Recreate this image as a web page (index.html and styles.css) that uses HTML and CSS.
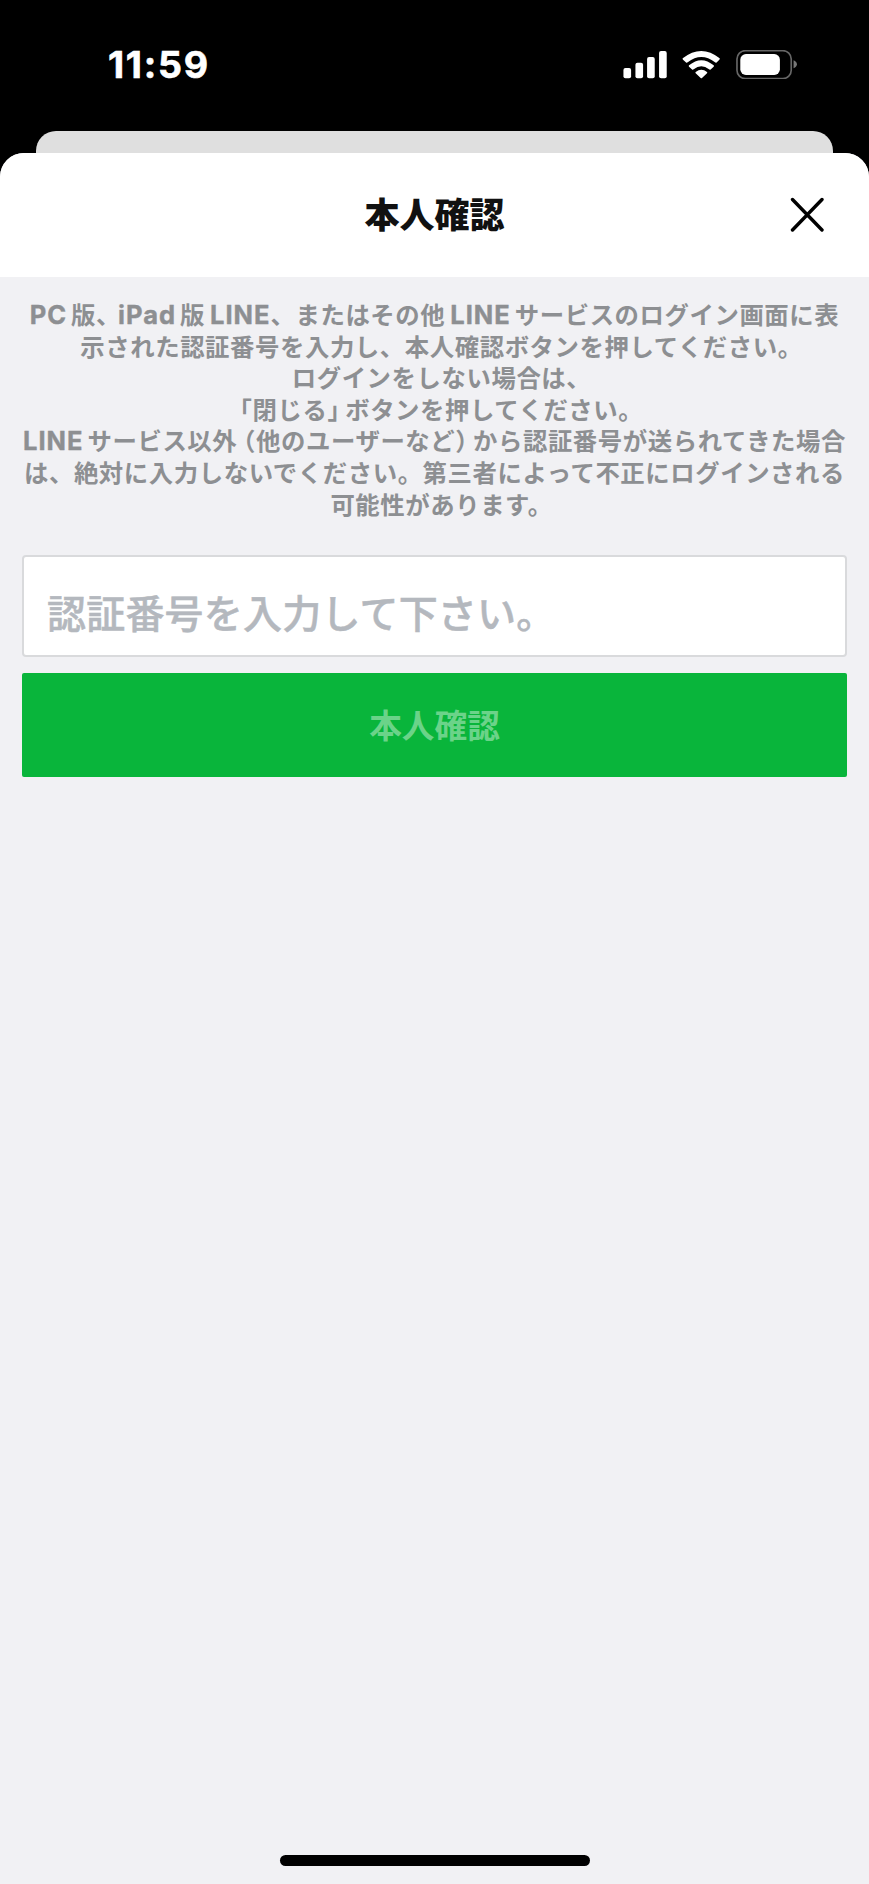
FILE: index.html
```html
<!DOCTYPE html>
<html lang="ja">
<head>
  <meta charset="UTF-8">
  <meta name="viewport" content="width=device-width, initial-scale=1.0">
  <title>本人確認</title>
  <link rel="stylesheet" href="styles.css">
</head>
<body>
  <div class="status-bar">
    <span class="time">11:59</span>
    <svg class="status-icons" viewBox="69 60 522 88" fill="#fff">
      <!-- signal -->
      <rect x="70" y="114" width="23" height="31" rx="6"/>
      <rect x="106" y="98" width="23" height="47" rx="6"/>
      <rect x="141" y="81" width="23" height="64" rx="6"/>
      <rect x="177" y="63" width="23" height="82" rx="6"/>
      <!-- wifi -->
      <path d="M248 85 Q304 41 359 85 Q360 87 358 89 L349 98 Q347 99 345 97 Q304 65 263 97 Q261 99 259 98 L249 89 Q247 87 248 85Z"/>
      <path d="M267 106 Q304 75 341 106 Q343 108 341 110 L331 119 Q329 120 327 118 Q304 100 281 118 Q279 120 277 119 L267 110 Q265 108 267 106Z"/>
      <path d="M287 126 Q304 112 321 126 Q323 128 321 130 L306 144 Q304 146 302 144 L287 130 Q285 128 287 126Z"/>
      <!-- battery -->
      <rect x="411" y="62" width="163" height="84" rx="25" fill="none" stroke="#666" stroke-width="5"/>
      <rect x="421" y="72" width="119" height="63" rx="17"/>
      <path d="M581 91 Q591 95 591 103 Q591 111 581 115Z" fill="#777"/>
    </svg>
  </div>

  <div class="back-sheet"></div>

  <div class="sheet">
    <header class="header">
      <h1>本人確認</h1>
      <button class="close-btn" aria-label="閉じる">
        <svg viewBox="0 0 34 36" fill="none" stroke="#000" stroke-width="3.4" stroke-linecap="round">
          <path d="M2.5 2.5 L32 33 M32 2.5 L2.5 33"/>
        </svg>
      </button>
    </header>

    <main class="content">
      <p class="notice">
        <span class="line"><b>PC</b>版、<b class="tight">iPad</b>版<b class="before-comma">LINE</b>、またはその他<b>LINE</b>サービスのログイン画面に表</span>
        <span class="line hang">示された認証番号を入力し、本人確認ボタンを押してください。</span>
        <span class="line hang">ログインをしない場合は、</span>
        <span class="line hang"><i>「</i>閉じる<i class="end">」</i>ボタンを押してください。</span>
        <span class="line"><b>LINE</b>サービス以外<i class="start">（</i>他のユーザーなど<i class="end">）</i>から認証番号が送られてきた場合</span>
        <span class="line">は、絶対に入力しないでください。第三者によって不正にログインされる</span>
        <span class="line hang">可能性があります。</span>
      </p>

      <input class="code-input" type="text" placeholder="認証番号を入力して下さい。">
      <button class="submit-btn" disabled>本人確認</button>
    </main>

    <div class="home-indicator"></div>
  </div>
</body>
</html>
```

FILE: styles.css
```css
* {
  box-sizing: border-box;
}

body {
  display: flex;
  flex-direction: column;
  height: 1884px;
  margin: 0;
  background-color: #000;
  font-family: 'Noto Sans CJK JP', sans-serif;
  overflow: hidden;
}

.status-bar {
  display: flex;
  justify-content: space-between;
  align-items: center;
  height: 131px;
  padding: 0 72px 2px 108px;
}

.time {
  font-family: 'Inter', sans-serif;
  font-size: 37.5px;
  font-weight: 700;
  letter-spacing: 1.7px;
  color: #fff;
  -webkit-text-stroke: 0.6px #fff;
}

.status-icons {
  width: 174px;
  height: 29.3px;
}

.back-sheet {
  height: 22px;
  margin: 0 36px;
  background-color: #dfdfdf;
  border-radius: 20px 20px 0 0;
}

.sheet {
  display: flex;
  flex: 1;
  flex-direction: column;
  background-color: #f1f1f4;
  border-radius: 24px 24px 0 0;
  overflow: hidden;
}

.header {
  display: grid;
  grid-template-columns: 1fr auto 1fr;
  align-items: center;
  height: 124px;
  padding: 0 45px;
  background-color: #fff;
}

.header h1 {
  grid-column: 2;
  margin: 0;
  padding-bottom: 4px;
  font-size: 35px;
  font-weight: 900;
  line-height: 50px;
  color: #111;
}

.close-btn {
  justify-self: end;
  display: flex;
  padding: 0;
  border: none;
  background: none;
}

.close-btn svg {
  width: 34px;
  height: 36px;
}

.content {
  display: flex;
  flex: 1;
  flex-direction: column;
  padding: 21px 22px 0;
}

.notice {
  margin: 0 0 36px;
  font-size: 24.4px;
  font-weight: 700;
  line-height: 31.6px;
  letter-spacing: 0.57px;
  text-align: center;
  color: #8d8f92;
}

.line {
  display: block;
  height: 31.6px;
  margin: 0 -10px;
  white-space: nowrap;
}

/* closing punctuation hangs past the centred text */
.hang {
  padding-left: 14px;
}

.notice b {
  margin: 0 4px 0 5px;
  font-family: 'Inter', sans-serif;
  font-size: 25.5px;
  font-weight: 700;
  letter-spacing: 1px;
  -webkit-text-stroke: 0.4px #8d8f92;
}

.notice b:first-child {
  margin-left: 0;
}

.notice .tight {
  margin-left: -3px;
}

.notice .before-comma {
  margin-right: 0;
}

/* half-width brackets */
.notice i {
  font-style: normal;
  font-feature-settings: 'halt';
}

.notice .start {
  margin-left: 6px;
}

.notice .end {
  margin-right: 5px;
}

.code-input {
  height: 102px;
  margin-bottom: 16px;
  padding: 10px 23px 0;
  border: 2px solid #d9dadc;
  border-radius: 4px;
  background-color: #fff;
  font-family: inherit;
  font-size: 39px;
  font-weight: 500;
}

.code-input::placeholder {
  color: #b4b8be;
  opacity: 1;
  letter-spacing: 0.2px;
  -webkit-text-stroke: 0.5px #b4b8be;
}

.submit-btn {
  height: 104px;
  padding: 0 0 3px;
  border: none;
  border-radius: 2px;
  background-color: #09b53b;
  font-family: inherit;
  font-size: 32.7px;
  font-weight: 700;
  color: #6bd389;
}

.home-indicator {
  align-self: center;
  width: 310px;
  height: 11px;
  margin-bottom: 18px;
  border-radius: 6px;
  background-color: #000;
}
```
